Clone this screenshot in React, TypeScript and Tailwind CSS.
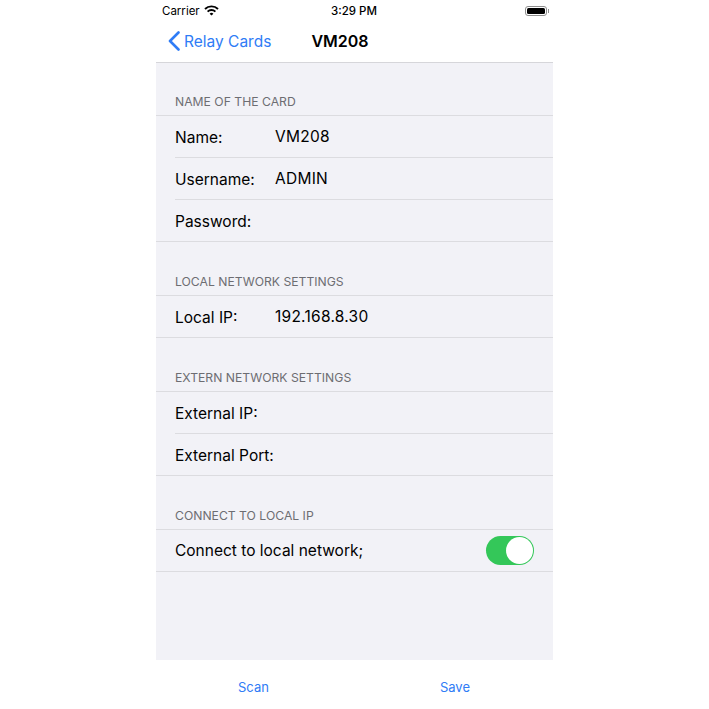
const font = "[font-family:Inter,'Liberation_Sans',sans-serif]";

function SectionHeader({ title, first }: { title: string; first?: boolean }) {
  return (
    <div className={`${first ? 'h-[52px]' : 'h-[53px]'} pl-[19px] pb-[5px] flex items-end`}>
      <span className="text-[12.2px] leading-[16px] text-[#6d6d72]">{title}</span>
    </div>
  );
}

function Row({ label, value, last }: { label: string; value?: string; last?: boolean }) {
  return (
    <div className={`h-[42px] pl-[19px] ${last ? 'border-b border-[#dcdce0]' : ''}`}>
      <div className={`h-[42px] pt-[2px] flex items-center whitespace-nowrap ${last ? '' : 'border-b border-[#dcdce0]'}`}>
        <span className="w-[100px] text-[15.5px] text-black">{label}</span>
        {value && <span className="text-[15.5px] text-black tracking-[0.25px] -mt-[2px]">{value}</span>}
      </div>
    </div>
  );
}

function Group({ children }: { children: React.ReactNode }) {
  return <div className="border-t border-[#dcdce0]">{children}</div>;
}

export default function App() {
  return (
    <div className={`w-[709px] h-[709px] bg-white flex justify-center overflow-hidden ${font}`}>
      <div className="w-[397px] flex flex-col">
        {/* status bar */}
        <div className="h-[21px] pt-[2px] flex items-center justify-between pl-[6px] pr-[4px] text-[11.5px] text-black">
          <div className="flex items-center gap-[4px] w-[130px]">
            <span>Carrier</span>
            <svg width="15" height="11" viewBox="0 0 15 11" fill="none" stroke="black" strokeWidth="1.9" className="-mt-[2px]">
              <path d="M1 4a9.300 9.300 0 0 1 13 0" />
              <path d="M3.600 6.600a5.600 5.600 0 0 1 7.800 0" />
              <path d="M7.500 10.600 5.600 8.700a2.700 2.700 0 0 1 3.800 0z" fill="black" stroke="none" />
            </svg>
          </div>
          <span className="font-medium -ml-[3px]">3:29 PM</span>
          <div className="w-[130px] flex justify-end items-center -mt-[2px]">
            <div className="w-[22px] h-[10px] rounded-[3px] border border-[#8e8e8e] p-px">
              <div className="w-full h-full rounded-[1.5px] bg-black" />
            </div>
            <div className="w-px h-[4px] bg-[#8e8e8e] ml-px" />
          </div>
        </div>

        {/* nav bar */}
        <div className="h-[42px] flex items-center border-b border-[#d6d6da] pb-[2px]">
          <div className="flex items-center text-[#2f7cf6] pl-[12px]">
            <svg width="12" height="20" viewBox="0 0 12 20" fill="none" stroke="currentColor" strokeWidth="2.6" strokeLinecap="round" strokeLinejoin="round">
              <path d="M10.500 1.500 2 10l8.500 8.500" />
            </svg>
            <span className="text-[15.5px] ml-[4px] mt-[2px]">Relay Cards</span>
          </div>
          <span className="ml-[40px] text-[16px] font-semibold text-black">VM208</span>
        </div>

        {/* settings list */}
        <div className="flex-1 bg-[#f2f2f7]">
          <SectionHeader title="NAME OF THE CARD" first />
          <Group>
            <Row label="Name:" value="VM208" />
            <Row label="Username:" value="ADMIN" />
            <Row label="Password:" last />
          </Group>
          <SectionHeader title="LOCAL NETWORK SETTINGS" />
          <Group>
            <Row label="Local IP:" value="192.168.8.30" last />
          </Group>
          <SectionHeader title="EXTERN NETWORK SETTINGS" />
          <Group>
            <Row label="External IP:" />
            <Row label="External Port:" last />
          </Group>
          <SectionHeader title="CONNECT TO LOCAL IP" />
          <Group>
            <div className="h-[42px] pl-[19px] pr-[19px] flex items-center justify-between border-b border-[#dcdce0]">
              <span className="text-[15.5px] text-black">Connect to local network;</span>
              <div className="w-[48px] h-[29px] rounded-full bg-[#34c759] flex items-center justify-end pr-[1px]">
                <div className="w-[27px] h-[27px] rounded-full bg-white" />
              </div>
            </div>
          </Group>
        </div>

        {/* toolbar */}
        <div className="h-[49px] flex items-center pt-[7px] pl-[82px] gap-[171px] text-[13px] text-[#2f7cf6]">
          <span>Scan</span>
          <span>Save</span>
        </div>
      </div>
    </div>
  );
}
